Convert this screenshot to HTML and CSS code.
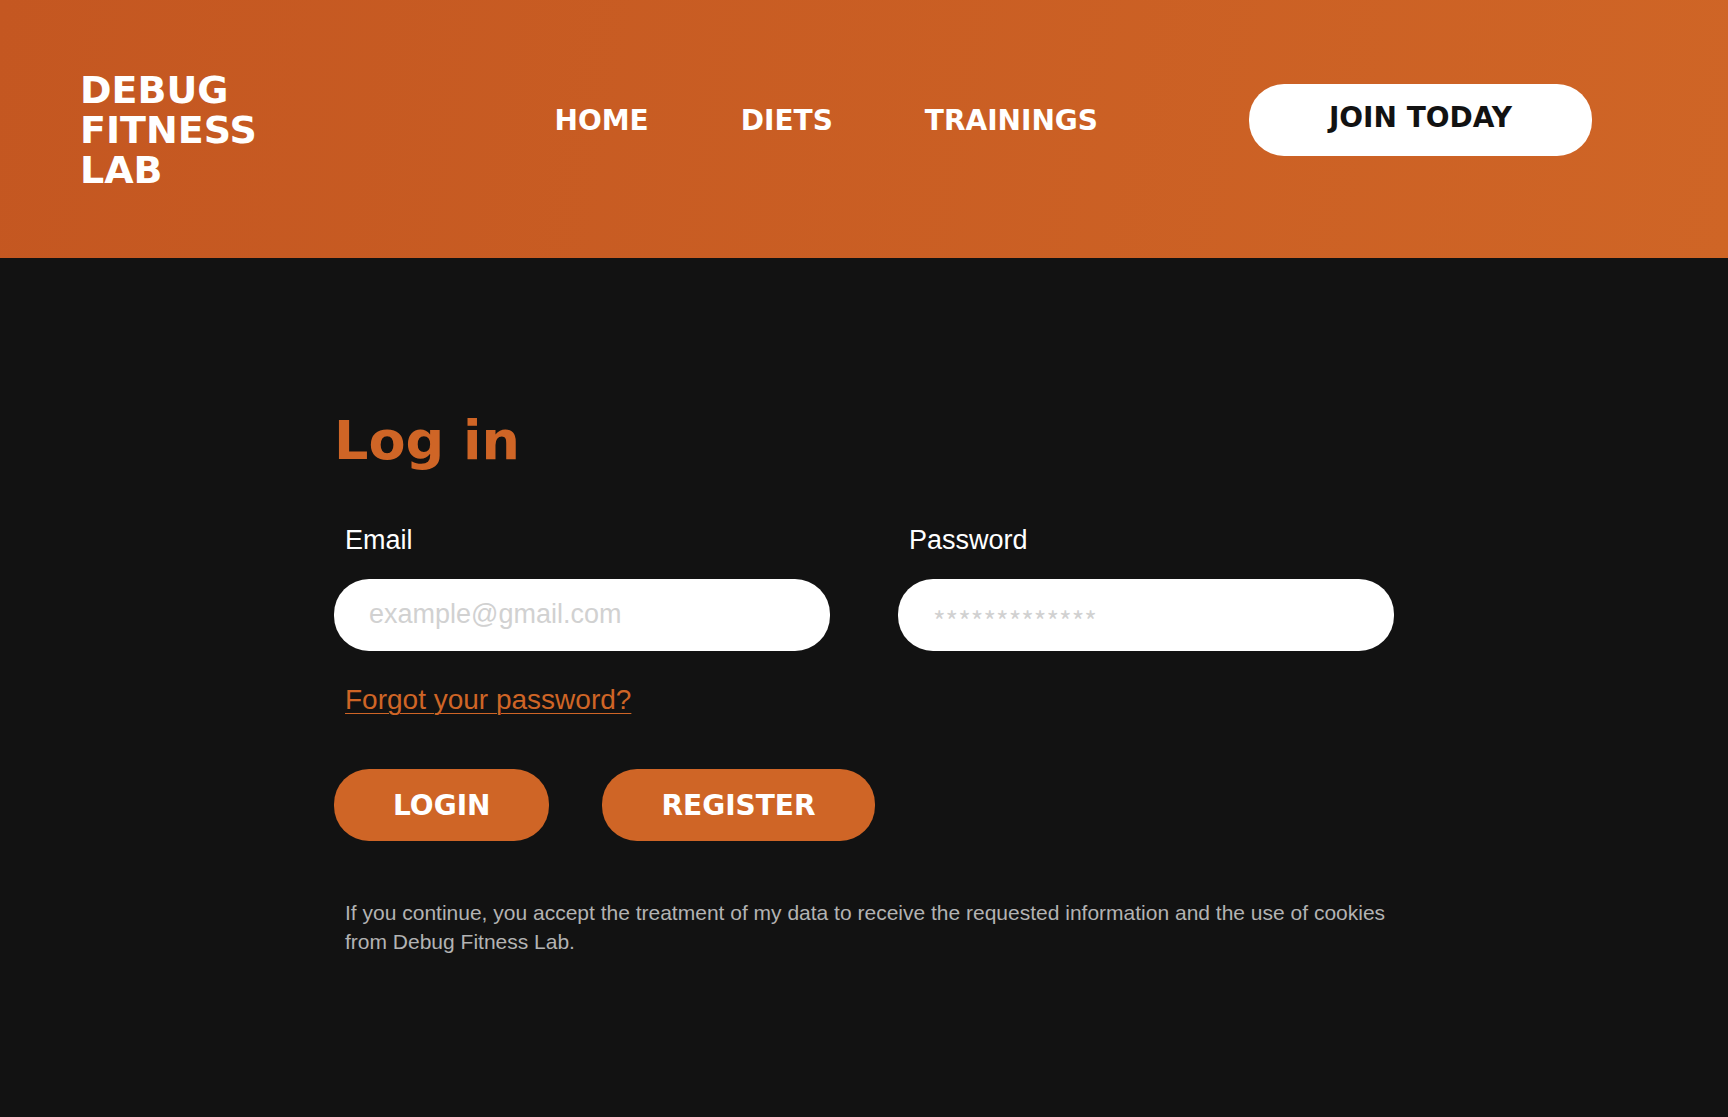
FILE: index.html
```html
<!DOCTYPE html>
<html lang="en">
<head>
    <meta charset="UTF-8">
    <meta name="viewport" content="width=device-width, initial-scale=1.0">
    <title>Debug Fitness Lab - Log in</title>
    <link rel="stylesheet" href="styles.css">
</head>
<body>
    <header class="header">
        <a class="logo" href="#">DEBUG<br>FITNESS<br>LAB</a>
        <nav class="nav">
            <a href="#">HOME</a>
            <a href="#">DIETS</a>
            <a href="#">TRAININGS</a>
        </nav>
        <button class="btn join-btn" type="button">JOIN TODAY</button>
    </header>

    <main class="login">
        <h1>Log in</h1>
        <form>
            <div class="fields">
                <div class="field">
                    <label for="email">Email</label>
                    <input type="email" id="email" placeholder="example@gmail.com">
                </div>
                <div class="field">
                    <label for="password">Password</label>
                    <input type="password" id="password" placeholder="*************">
                </div>
            </div>
            <a class="forgot" href="#">Forgot your password?</a>
            <div class="actions">
                <button class="btn" type="submit">LOGIN</button>
                <button class="btn" type="button">REGISTER</button>
            </div>
        </form>
        <p class="legal">If you continue, you accept the treatment of my data to receive the requested information and the use of cookies from Debug Fitness Lab.</p>
    </main>
</body>
</html>
```
FILE: styles.css
```css
:root {
    --orange: #cf6526;
    --dark: #121212;
    --title-font: "DejaVu Sans", Verdana, sans-serif;
    --body-font: "Liberation Sans", Arial, sans-serif;
}

* {
    box-sizing: border-box;
}

body {
    margin: 0;
    min-height: 100vh;
    background-color: var(--dark);
    color: white;
    font-family: var(--body-font);
}

.header {
    display: grid;
    grid-template-columns: 1fr auto 343px;
    column-gap: 151px;
    align-items: start;
    padding: 70px 136px 68px 80px;
    background: linear-gradient(100deg, #c45721, var(--orange));
    font-family: var(--title-font);
    font-weight: bold;
}

.header a {
    color: white;
    text-decoration: none;
}

.logo {
    font-size: 38px;
    line-height: 40px;
}

.nav {
    display: flex;
    gap: 92px;
    padding-top: 35px;
    font-size: 28px;
    line-height: 32px;
}

.btn {
    height: 72px;
    padding: 0 59px;
    border: none;
    border-radius: 35px;
    background-color: var(--orange);
    color: white;
    font-family: var(--title-font);
    font-size: 28px;
    font-weight: bold;
    cursor: pointer;
}

.join-btn {
    margin-top: 14px;
    padding: 0 0 6px;
    background-color: white;
    color: var(--dark);
}

.login {
    max-width: 1060px;
    margin: 0 auto;
    padding: 153px 0 60px;
}

h1 {
    margin: 0 0 53px;
    color: var(--orange);
    font-family: var(--title-font);
    font-size: 54px;
    line-height: 60px;
}

.fields {
    display: grid;
    grid-template-columns: 1fr 1fr;
    gap: 68px;
    margin-bottom: 33px;
}

.field {
    display: flex;
    flex-direction: column;
    gap: 23px;
}

label {
    padding-left: 11px;
    font-size: 27px;
    line-height: 32px;
}

input {
    width: 100%;
    height: 72px;
    padding: 0 35px 2px;
    border: none;
    border-radius: 35px;
    background-color: white;
    color: var(--dark);
    font-family: var(--body-font);
    font-size: 27px;
}

input::placeholder {
    color: #d1d1d1;
}

input[type="password"] {
    padding-top: 12px;
    font-family: "Noto Sans CJK SC", sans-serif;
}

.forgot {
    display: block;
    width: fit-content;
    margin: 0 0 53px 11px;
    color: var(--orange);
    font-size: 28px;
    line-height: 32px;
    text-decoration-thickness: 1px;
    text-underline-offset: 4px;
}

.actions {
    display: flex;
    gap: 53px;
}

.legal {
    margin: 57px 0 0 11px;
    color: #b3b3b3;
    font-size: 21px;
    line-height: 29px;
}
```
